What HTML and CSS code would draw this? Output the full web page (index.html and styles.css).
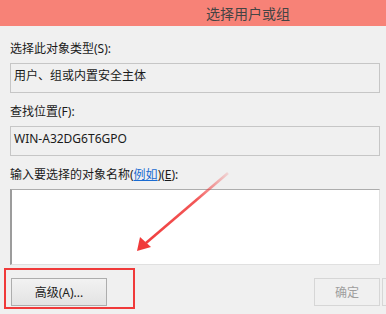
FILE: index.html
```html
<!DOCTYPE html>
<html>
<head>
<meta charset="utf-8">
<link rel="stylesheet" href="styles.css">
</head>
<body>
<div class="window">
  <div class="titlebar"><span class="title">选择用户或组</span></div>
  <div class="content">
    <div class="label">选择此对象类型(S):</div>
    <div class="field">用户、组或内置安全主体</div>
    <div class="label gap">查找位置(F):</div>
    <div class="field">WIN-A32DG6T6GPO</div>
    <div class="label gap">输入要选择的对象名称(<a class="link">例如</a>)(<u>E</u>):</div>
    <div class="textarea"></div>
    <div class="buttons">
      <div class="btn">高级(A)...</div>
      <div class="btn disabled">确定</div>
      <div class="btn partial"></div>
    </div>
  </div>
  <div class="highlight"></div>
  <svg class="arrow" width="386" height="314" viewBox="0 0 386 314">
    <defs>
      <linearGradient id="fade" x1="228" y1="173" x2="138" y2="250" gradientUnits="userSpaceOnUse">
        <stop offset="0" stop-color="#f03a3a" stop-opacity="0.15"/>
        <stop offset="0.35" stop-color="#f03a3a" stop-opacity="0.85"/>
        <stop offset="1" stop-color="#f03a3a"/>
      </linearGradient>
    </defs>
    <line x1="228" y1="173" x2="146" y2="243" stroke="url(#fade)" stroke-width="2.6"/>
    <polygon points="137,251 140,237 151,247" fill="#f03a3a"/>
  </svg>
</div>
</body>
</html>
```
FILE: styles.css
```css
html, body {
  margin: 0;
  padding: 0;
  background: #f0f0f0;
}
.window {
  position: relative;
  width: 386px;
  height: 314px;
  overflow: hidden;
  background: #f0f0f0;
  font-family: "Noto Sans", "Noto Sans CJK SC", sans-serif;
  font-size: 12px;
  color: #1a1a1a;
}
.titlebar {
  height: 26px;
  background: #f78277;
  display: flex;
  align-items: center;
  justify-content: center;
  padding-left: 110px;
}
.title {
  font-family: "Noto Sans CJK SC", sans-serif;
  font-size: 14px;
  color: #444;
  line-height: 18px;
}
.content {
  padding: 15px 0 0 10px;
  width: 370px;
}
.label {
  line-height: 16px;
  height: 16px;
  margin-bottom: 6px;
  white-space: nowrap;
}
.label.gap {
  margin-top: 11px;
}
.link {
  color: #1a6bd1;
  text-decoration: underline;
}
.field {
  border: 1px solid #c6c6c6;
  padding: 4px 3px 0;
  line-height: 16px;
  height: 24px;
  background: #f0f0f0;
}
.textarea {
  margin-top: 3px;
  height: 74px;
  background: #fff;
  border-top: 1px solid #adadad;
  border-left: 2px solid #9c9c9c;
  border-right: 1px solid #e0e0e0;
  border-bottom: 1px solid #e0e0e0;
}
.buttons {
  display: flex;
  align-items: flex-start;
  margin-top: 13px;
}
.btn {
  width: 94px;
  height: 26px;
  border: 1px solid #adadad;
  background: linear-gradient(#f2f2f2, #e3e3e3);
  display: flex;
  align-items: center;
  justify-content: center;
  font-size: 12px;
  color: #222;
  margin-left: 1px;
  flex-shrink: 0;
}
.btn.disabled {
  margin-left: auto;
  width: 64px;
  background: #f0f0f0;
  border-color: #d6d6d6;
  color: #9e9e9e;
}
.btn.partial {
  margin-left: 2px;
  margin-right: -34px;
  width: 30px;
  background: #f0f0f0;
  border-color: #d6d6d6;
}
.highlight {
  position: absolute;
  left: 4px;
  top: 268px;
  width: 127px;
  height: 37px;
  border: 2px solid #f03a3a;
}
.arrow {
  position: absolute;
  left: 0;
  top: 0;
  pointer-events: none;
}
```
